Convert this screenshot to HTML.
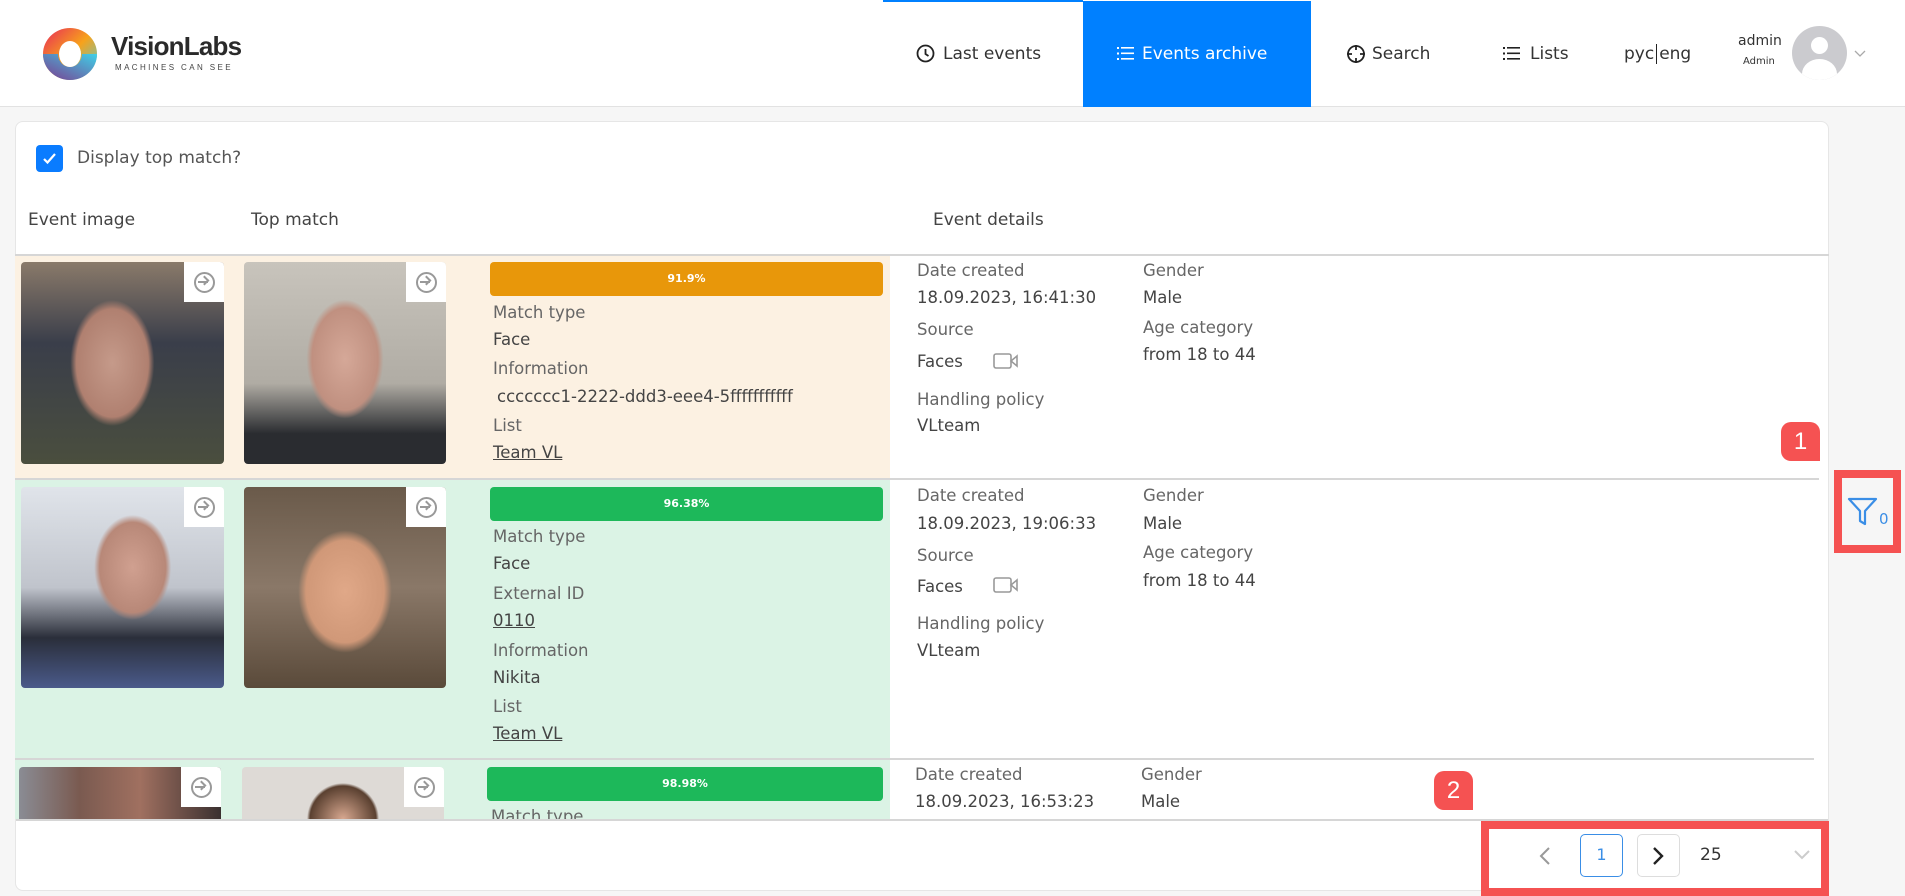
<!DOCTYPE html>
<html><head><meta charset="utf-8"><style>
*{margin:0;padding:0;box-sizing:border-box}
body{width:1905px;height:894px;overflow:hidden;background:#f6f6f6;font-family:"DejaVu Sans","Liberation Sans",sans-serif;color:#444;position:relative}
.a{position:absolute;white-space:nowrap}
.hdr{position:absolute;left:0;top:0;width:1905px;height:107px;background:#fff;border-bottom:1px solid #e2e2e2}
.nav{font-size:17px;color:#333;line-height:20px}
.card{position:absolute;left:15px;top:121px;width:1814px;height:770px;background:#fff;border:1px solid #e6e6e6;border-radius:8px;overflow:hidden}
.lbl{font-size:16.5px;color:#666;line-height:20px}
.val{font-size:16.5px;color:#444;line-height:20px}
.u{text-decoration:underline}
.img{position:absolute;border-radius:4px;overflow:hidden}
.arr{position:absolute;right:0;top:0;width:40px;height:40px;background:#fff}
.arr:after{content:"";position:absolute;left:10px;top:10px;width:17px;height:17px;border:2px solid #999;border-radius:50%}
.arr i{position:absolute;left:14px;top:19px;width:10px;height:2px;background:#999}
.arr b{position:absolute;left:17px;top:15px;width:7px;height:7px;border-top:2px solid #999;border-right:2px solid #999;transform:rotate(45deg)}
.bar{position:absolute;height:34px;border-radius:4px;color:#fff;font-size:11px;font-weight:bold;text-align:center;line-height:34px}
.line{position:absolute;height:2px;background:#d6d6d6}
.badge{position:absolute;width:39px;height:39px;background:#f55252;color:#fff;border-radius:10px 10px 0 10px;font-size:24px;text-align:center;line-height:39px;font-family:"Liberation Sans",sans-serif}
</style></head><body>
<div class="hdr"></div>
<svg class="a" style="left:42px;top:27px" width="56" height="54" viewBox="0 0 56 54">
<defs><linearGradient id="g1" x1="0" y1="0" x2="1" y2="1"><stop offset="0" stop-color="#e8285a"/><stop offset=".5" stop-color="#f7a21b"/><stop offset="1" stop-color="#3fd0e8"/></linearGradient>
<linearGradient id="g2" x1="0" y1="1" x2="1" y2="0"><stop offset="0" stop-color="#7b3c8f"/><stop offset="1" stop-color="#3fd0e8"/></linearGradient></defs>
<ellipse cx="28" cy="27" rx="27" ry="26" fill="url(#g1)"/>
<path d="M1 27 A27 26 0 0 0 55 27 L40 27 A12 13 0 0 1 16 27Z" fill="url(#g2)"/>
<ellipse cx="28" cy="27" rx="11" ry="13" fill="#fff"/>
</svg>
<div class="a" style="left:111px;top:31px;font-size:26px;font-weight:bold;color:#2a2a2a;letter-spacing:-0.8px;font-family:'Liberation Sans',sans-serif">VisionLabs</div>
<div class="a" style="left:115px;top:63px;font-size:8px;letter-spacing:2.4px;color:#444;font-family:'Liberation Sans',sans-serif">MACHINES CAN SEE</div>
<div class="a" style="left:883px;top:0;width:200px;height:2px;background:#0080ff"></div>
<div class="a" style="left:1083px;top:1px;width:228px;height:106px;background:#0080ff"></div>
<svg class="a" style="left:916px;top:44px" width="19" height="19" viewBox="0 0 19 19"><circle cx="9.5" cy="9.5" r="8" fill="none" stroke="#222" stroke-width="1.8"/><path d="M9.5 5v5l3 2" fill="none" stroke="#222" stroke-width="1.8"/></svg>
<div class="a nav" style="left:943px;top:44px">Last events</div>
<svg class="a" style="left:1117px;top:46px" width="17" height="15" viewBox="0 0 17 15"><g fill="#fff"><rect x="0" y="1" width="2" height="2"/><rect x="0" y="6.5" width="2" height="2"/><rect x="0" y="12" width="2" height="2"/><rect x="4" y="1" width="13" height="1.6"/><rect x="4" y="6.5" width="13" height="1.6"/><rect x="4" y="12" width="13" height="1.6"/></g></svg>
<div class="a nav" style="left:1142px;top:44px;color:#fff">Events archive</div>
<svg class="a" style="left:1346px;top:44px" width="20" height="20" viewBox="0 0 20 20"><circle cx="10" cy="10" r="8" fill="none" stroke="#222" stroke-width="1.8"/><path d="M10 1v5M10 14v5M1 10h5M14 10h5" stroke="#222" stroke-width="1.8"/></svg>
<div class="a nav" style="left:1372px;top:44px">Search</div>
<svg class="a" style="left:1503px;top:46px" width="17" height="15" viewBox="0 0 17 15"><g fill="#222"><rect x="0" y="1" width="2" height="2"/><rect x="0" y="6.5" width="2" height="2"/><rect x="0" y="12" width="2" height="2"/><rect x="4" y="1" width="13" height="1.6"/><rect x="4" y="6.5" width="13" height="1.6"/><rect x="4" y="12" width="13" height="1.6"/></g></svg>
<div class="a nav" style="left:1530px;top:44px">Lists</div>
<div class="a nav" style="left:1624px;top:44px">рус<span style="border-left:1.5px solid #222;margin:0 2px"></span>eng</div>
<div class="a" style="left:1738px;top:33px;font-size:14px;color:#333">admin</div>
<div class="a" style="left:1743px;top:56px;font-size:10px;color:#333">Admin</div>
<div class="a" style="left:1792px;top:26px;width:55px;height:54px;border-radius:50%;background:#cbcbcf;overflow:hidden">
<div class="a" style="left:19px;top:11px;width:17px;height:17px;border-radius:50%;background:#fff"></div>
<div class="a" style="left:10px;top:33px;width:35px;height:30px;border-radius:50%;background:#fff"></div></div>
<svg class="a" style="left:1854px;top:50px" width="12" height="8" viewBox="0 0 12 8"><path d="M1 1l5 5 5-5" fill="none" stroke="#aaa" stroke-width="1.3"/></svg>

<div class="card"></div>
<div class="a" style="left:36px;top:145px;width:27px;height:27px;border-radius:4px;background:#0a7cff"></div>
<svg class="a" style="left:42px;top:152px" width="15" height="13" viewBox="0 0 15 13"><path d="M2 7l3.5 3.5L13 2" fill="none" stroke="#fff" stroke-width="2.2"/></svg>
<div class="a" style="left:77px;top:148px;font-size:17px;color:#555">Display top match?</div>
<div class="a" style="left:28px;top:210px;font-size:17px;color:#444">Event image</div>
<div class="a" style="left:251px;top:210px;font-size:17px;color:#444">Top match</div>
<div class="a" style="left:933px;top:210px;font-size:17px;color:#444">Event details</div>
<div class="line" style="left:15px;top:254px;width:1814px"></div>

<div class="a" style="left:15px;top:256px;width:875px;height:222px;background:#fcf1e2"></div>
<div class="img" style="left:21px;top:262px;width:203px;height:202px;background:radial-gradient(ellipse 60px 90px at 45% 50%,#c59a8a 0,#b08070 60%,transparent 70%),linear-gradient(180deg,#8a7a6a 0,#3a3e4a 40%,#4a4e3e 100%)"><div class="arr"><i></i><b></b></div></div>
<div class="img" style="left:244px;top:262px;width:202px;height:202px;background:radial-gradient(ellipse 55px 85px at 50% 48%,#d5a898 0,#c09080 60%,transparent 70%),linear-gradient(180deg,#c8c4bc 0,#b0aca4 60%,#2a2c30 85%)"><div class="arr"><i></i><b></b></div></div>
<div class="bar" style="left:490px;top:262px;width:393px;background:#e8970a">91.9%</div>
<div class="a lbl" style="left:493px;top:303px">Match type</div>
<div class="a val" style="left:493px;top:330px">Face</div>
<div class="a lbl" style="left:493px;top:359px">Information</div>
<div class="a val" style="left:497px;top:387px">ccccccc1-2222-ddd3-eee4-5fffffffffff</div>
<div class="a lbl" style="left:493px;top:416px">List</div>
<div class="a val u" style="left:493px;top:443px">Team VL</div>
<div class="a lbl" style="left:917px;top:261px">Date created</div>
<div class="a val" style="left:917px;top:288px">18.09.2023, 16:41:30</div>
<div class="a lbl" style="left:917px;top:320px">Source</div>
<div class="a val" style="left:917px;top:352px">Faces</div>
<svg class="a" style="left:993px;top:352px" width="26" height="18" viewBox="0 0 26 18"><rect x="1" y="2" width="17" height="14" rx="2" fill="none" stroke="#999" stroke-width="1.6"/><path d="M18 9l6-5v10z" fill="none" stroke="#999" stroke-width="1.6"/></svg>
<div class="a lbl" style="left:917px;top:390px">Handling policy</div>
<div class="a val" style="left:917px;top:416px">VLteam</div>
<div class="a lbl" style="left:1143px;top:261px">Gender</div>
<div class="a val" style="left:1143px;top:288px">Male</div>
<div class="a lbl" style="left:1143px;top:318px">Age category</div>
<div class="a val" style="left:1143px;top:345px">from 18 to 44</div>
<div class="line" style="left:15px;top:478px;width:1804px"></div>

<div class="a" style="left:15px;top:480px;width:875px;height:278px;background:#dbf3e5"></div>
<div class="img" style="left:21px;top:487px;width:203px;height:201px;background:radial-gradient(ellipse 55px 75px at 55% 40%,#d0a090 0,#b88878 60%,transparent 70%),linear-gradient(180deg,#e0e4ea 0,#c0c4cc 50%,#2a2e3a 75%,#4a5a8a 100%)"><div class="arr"><i></i><b></b></div></div>
<div class="img" style="left:244px;top:487px;width:202px;height:201px;background:radial-gradient(ellipse 65px 85px at 50% 52%,#e0a888 0,#d09878 60%,transparent 72%),linear-gradient(180deg,#6a5a4a 0,#8a7868 50%,#5a4a3a 100%)"><div class="arr"><i></i><b></b></div></div>
<div class="bar" style="left:490px;top:487px;width:393px;background:#1db85a">96.38%</div>
<div class="a lbl" style="left:493px;top:527px">Match type</div>
<div class="a val" style="left:493px;top:554px">Face</div>
<div class="a lbl" style="left:493px;top:584px">External ID</div>
<div class="a val u" style="left:493px;top:611px">0110</div>
<div class="a lbl" style="left:493px;top:641px">Information</div>
<div class="a val" style="left:493px;top:668px">Nikita</div>
<div class="a lbl" style="left:493px;top:697px">List</div>
<div class="a val u" style="left:493px;top:724px">Team VL</div>
<div class="a lbl" style="left:917px;top:486px">Date created</div>
<div class="a val" style="left:917px;top:514px">18.09.2023, 19:06:33</div>
<div class="a lbl" style="left:917px;top:546px">Source</div>
<div class="a val" style="left:917px;top:577px">Faces</div>
<svg class="a" style="left:993px;top:576px" width="26" height="18" viewBox="0 0 26 18"><rect x="1" y="2" width="17" height="14" rx="2" fill="none" stroke="#999" stroke-width="1.6"/><path d="M18 9l6-5v10z" fill="none" stroke="#999" stroke-width="1.6"/></svg>
<div class="a lbl" style="left:917px;top:614px">Handling policy</div>
<div class="a val" style="left:917px;top:641px">VLteam</div>
<div class="a lbl" style="left:1143px;top:486px">Gender</div>
<div class="a val" style="left:1143px;top:514px">Male</div>
<div class="a lbl" style="left:1143px;top:543px">Age category</div>
<div class="a val" style="left:1143px;top:571px">from 18 to 44</div>
<div class="line" style="left:15px;top:758px;width:1799px"></div>

<div class="a" style="left:15px;top:760px;width:875px;height:59px;background:#dbf3e5"></div>
<div class="img" style="left:19px;top:767px;width:202px;height:52px;border-radius:4px 4px 0 0;background:linear-gradient(90deg,#8a8c94 0,#7a5a50 30%,#a07060 60%,#3a3030 100%)"><div class="arr"><i></i><b></b></div></div>
<div class="img" style="left:242px;top:767px;width:202px;height:52px;border-radius:4px 4px 0 0;background:radial-gradient(ellipse 60px 60px at 50% 100%,#d8a890 0,#5a4030 55%,transparent 60%),#dedad6"><div class="arr"><i></i><b></b></div></div>
<div class="bar" style="left:487px;top:767px;width:396px;background:#1db85a">98.98%</div>
<div class="a lbl" style="left:491px;top:807px;height:12px;overflow:hidden">Match type</div>
<div class="a lbl" style="left:915px;top:765px">Date created</div>
<div class="a val" style="left:915px;top:792px">18.09.2023, 16:53:23</div>
<div class="a lbl" style="left:1141px;top:765px">Gender</div>
<div class="a val" style="left:1141px;top:792px">Male</div>
<div class="a" style="left:16px;top:819px;width:1812px;height:71px;background:#fff;border-top:2px solid #d6d6d6;border-radius:0 0 8px 8px"></div>

<svg class="a" style="left:1538px;top:846px" width="14" height="20" viewBox="0 0 14 20"><path d="M11 2L3 10l8 8" fill="none" stroke="#999" stroke-width="2"/></svg>
<div class="a" style="left:1580px;top:834px;width:43px;height:43px;border:1.5px solid #3a8ee6;border-radius:5px;color:#3a8ee6;font-size:16px;text-align:center;line-height:40px">1</div>
<div class="a" style="left:1637px;top:834px;width:43px;height:43px;border:1px solid #ddd;border-radius:5px"></div>
<svg class="a" style="left:1651px;top:846px" width="14" height="20" viewBox="0 0 14 20"><path d="M3 2l8 8-8 8" fill="none" stroke="#222" stroke-width="2.4"/></svg>
<div class="a" style="left:1700px;top:845px;font-size:17px;color:#333">25</div>
<svg class="a" style="left:1794px;top:850px" width="16" height="10" viewBox="0 0 16 10"><path d="M1 1l7 7 7-7" fill="none" stroke="#ccc" stroke-width="2"/></svg>

<svg class="a" style="left:1847px;top:497px" width="31" height="29" viewBox="0 0 31 29"><path d="M2 2h27L18 14v13l-5-3V14z" fill="none" stroke="#3a8ee6" stroke-width="2.2" stroke-linejoin="round"/></svg>
<div class="a" style="left:1879px;top:510px;font-size:15px;color:#3a8ee6">0</div>

<div class="a" style="left:1834px;top:470px;width:67px;height:83px;border:8px solid #f55252"></div>
<div class="a" style="left:1481px;top:821px;width:348px;height:75px;border:8px solid #f55252"></div>
<div class="badge" style="left:1781px;top:422px">1</div>
<div class="badge" style="left:1434px;top:771px">2</div>
</body></html>
